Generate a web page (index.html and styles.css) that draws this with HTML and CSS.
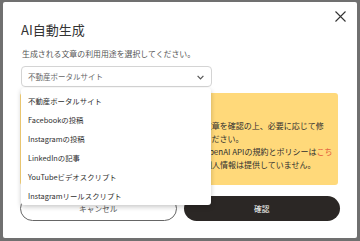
FILE: index.html
```html
<!DOCTYPE html>
<html lang="ja">
<head>
<meta charset="utf-8">
<title>AI自動生成</title>
<link rel="stylesheet" href="styles.css">
</head>
<body>
<div class="modal">
  <button class="close" aria-label="閉じる">
    <svg width="11" height="11" viewBox="0 0 11 11"><path d="M0.5 0.5 L10.5 10.5 M10.5 0.5 L0.5 10.5" stroke="#333" stroke-width="1.1" fill="none"/></svg>
  </button>
  <h1 class="title">AI自動生成</h1>
  <p class="label">生成される文章の利用用途を選択してください。</p>
  <div class="select-wrap">
    <div class="select">
      <span class="select-value">不動産ポータルサイト</span>
      <svg class="chev" width="7" height="5" viewBox="0 0 7 5"><path d="M0.6 0.8 L3.5 3.8 L6.4 0.8" stroke="#555" stroke-width="1.2" fill="none"/></svg>
    </div>
    <ul class="menu">
      <li>不動産ポータルサイト</li>
      <li>Facebookの投稿</li>
      <li>Instagramの投稿</li>
      <li>LinkedInの記事</li>
      <li>YouTubeビデオスクリプト</li>
      <li>Instagramリールスクリプト</li>
    </ul>
  </div>
  <div class="notice">
    <span class="line">【ご注意ください】</span>
    <span class="line">生成された内容は誤りを含む可能性があるので、文章を確認の上、必要に応じて修</span>
    <span class="line">正してください。ご利用の際は必ず内容をご確認ください。</span>
    <span class="line">本機能は外部サービスを利用して生成しており、OpenAI APIの規約とポリシーは<a class="link">こち</a></span>
    <span class="line"><a class="link">ら</a>をご確認ください。なお、当社から外部企業へ個人情報は提供していません。</span>
  </div>
  <div class="actions">
    <button class="btn btn-cancel">キャンセル</button>
    <button class="btn btn-ok">確認</button>
  </div>
</div>
</body>
</html>
```
FILE: styles.css
```css
* { box-sizing: border-box; }
html, body { margin: 0; padding: 0; }
body {
  width: 360px;
  height: 241px;
  overflow: hidden;
  background: #707070;
  font-family: "Noto Sans CJK JP", "Noto Sans", sans-serif;
  color: #333;
}
.modal {
  position: relative;
  margin: 2px 0 0 3px;
  width: 354px;
  height: 236px;
  background: #fff;
  border-radius: 2px;
  padding: 18px 17px 17px;
  display: flex;
  flex-direction: column;
}
.close {
  position: absolute;
  top: 9px;
  right: 11px;
  width: 11px;
  height: 11px;
  padding: 0;
  border: 0;
  background: none;
  display: flex;
}
.title {
  margin: 0 0 8.5px;
  font-size: 13px;
  line-height: 19.5px;
  font-weight: 400;
  color: #333;
  padding-left: 1px;
}
.label {
  margin: 0 0 6px;
  font-size: 7.9px;
  line-height: 12px;
  color: #555;
  padding-left: 2px;
}
.select-wrap {
  position: relative;
  width: 191px;
  margin-left: 1px;
}
.select {
  height: 21px;
  border: 1px solid #d4d4d4;
  border-radius: 4px;
  display: flex;
  align-items: center;
  justify-content: space-between;
  padding: 0 7px 0 6px;
}
.select-value {
  font-size: 7.5px;
  color: #666;
}
.chev { display: block; margin-top: 1px; }
.menu {
  position: absolute;
  top: 22px;
  left: 0;
  width: 190px;
  height: 117px;
  margin: 0;
  padding: 3px 0 0;
  list-style: none;
  background: #fff;
  border-radius: 3px;
  box-shadow: 0 2px 5px rgba(0,0,0,0.22);
  z-index: 2;
}
.menu li {
  height: 19px;
  line-height: 19px;
  padding-left: 7px;
  font-size: 7.4px;
  color: #2e2e2e;
}
.notice {
  margin: 6px 2px 0 0;
  height: 92px;
  background: #ffd97a;
  border-radius: 3px;
  padding: 13px 8px 14px;
  font-size: 8px;
  line-height: 13px;
  color: #2e2e2e;
}
.line { display: block; white-space: nowrap; }
.link { color: #e35a3a; }
.actions {
  margin-top: 11px;
  display: grid;
  grid-template-columns: 1fr 1fr;
  gap: 7px;
}
.btn {
  height: 25px;
  border-radius: 12.5px;
  font-family: inherit;
  font-size: 7.7px;
  padding: 0;
}
.btn-cancel {
  background: #fff;
  border: 1px solid #666;
  color: #555;
}
.btn-ok {
  background: #2b2725;
  border: 0;
  color: #fff;
}
```
